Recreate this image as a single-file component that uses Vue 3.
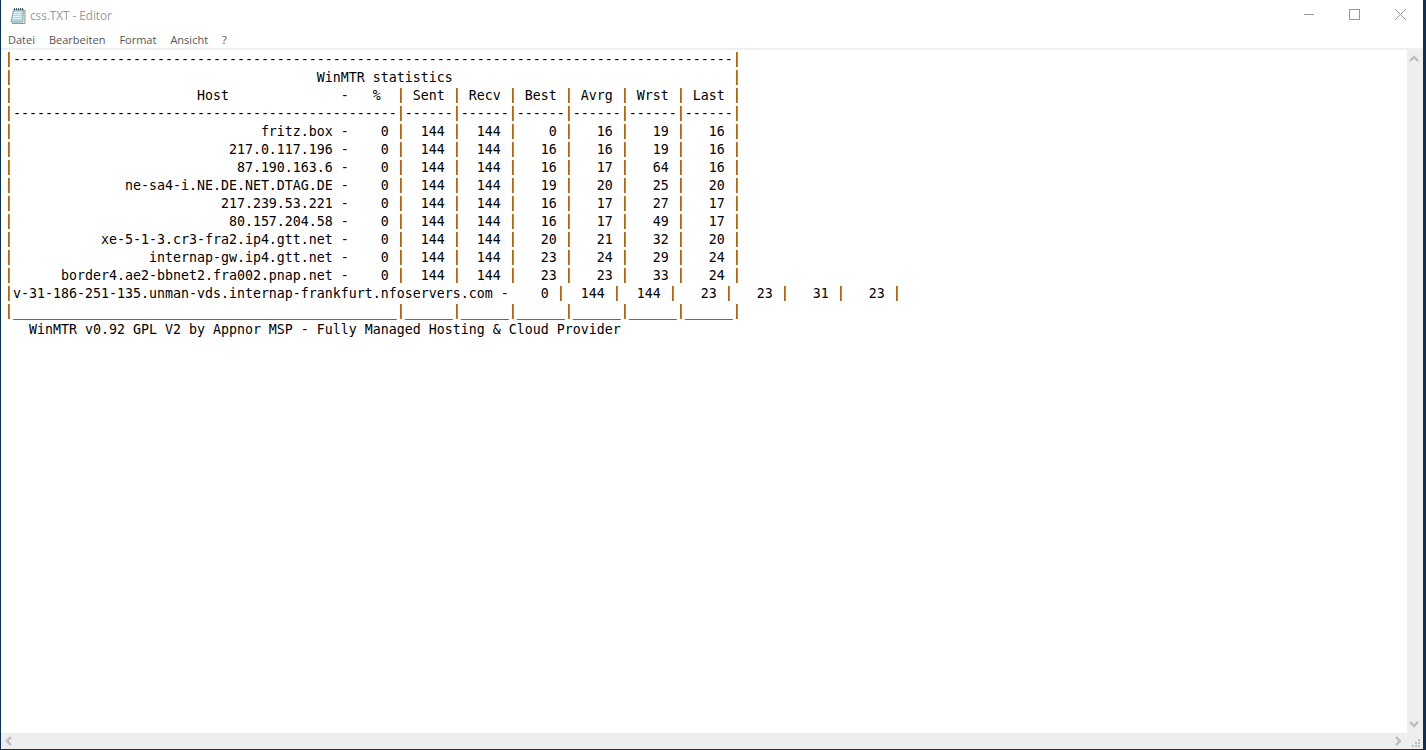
<script setup>
const menus = ['Datei', 'Bearbeiten', 'Format', 'Ansicht', '?']

const cell = (v) => String(v).padStart(5) + ' |'

const hosts = [
  ['fritz.box', 0, 144, 144, 0, 16, 19, 16],
  ['217.0.117.196', 0, 144, 144, 16, 16, 19, 16],
  ['87.190.163.6', 0, 144, 144, 16, 17, 64, 16],
  ['ne-sa4-i.NE.DE.NET.DTAG.DE', 0, 144, 144, 19, 20, 25, 20],
  ['217.239.53.221', 0, 144, 144, 16, 17, 27, 17],
  ['80.157.204.58', 0, 144, 144, 16, 17, 49, 17],
  ['xe-5-1-3.cr3-fra2.ip4.gtt.net', 0, 144, 144, 20, 21, 32, 20],
  ['internap-gw.ip4.gtt.net', 0, 144, 144, 23, 24, 29, 24],
  ['border4.ae2-bbnet2.fra002.pnap.net', 0, 144, 144, 23, 23, 33, 24],
  ['v-31-186-251-135.unman-vds.internap-frankfurt.nfoservers.com', 0, 144, 144, 23, 23, 31, 23],
]

const rows = hosts.map(([host, pct, ...rest]) =>
  '|' + host.padStart(40) + ' -    ' + pct + ' |' + rest.map(cell).join('')
)

const rule = (ch) => '|' + ch.repeat(48) + ('|' + ch.repeat(6)).repeat(6) + '|'

const lines = [
  '|' + '-'.repeat(90) + '|',
  '|' + ' '.repeat(38) + 'WinMTR statistics' + ' '.repeat(35) + '|',
  '|' + ' '.repeat(23) + 'Host' + ' '.repeat(14) + '-   %  | Sent | Recv | Best | Avrg | Wrst | Last |',
  rule('-'),
  ...rows,
  rule('_'),
  '   WinMTR v0.92 GPL V2 by Appnor MSP - Fully Managed Hosting & Cloud Provider',
]

// split on the pipes, they get their own colour (cleartype fringe in the original)
const parts = (line) => line.split(/(\|)/).filter((p) => p !== '')
</script>

<template>
  <div class="window">
    <header class="titlebar">
      <svg class="app-icon" width="17" height="17" viewBox="0 0 17 17">
        <path d="M5 3.5h11v13H3.5z" fill="#f4efe2" stroke="#a8925f" />
        <path d="M4.5 2.5h10l-.8 12.5H2z" fill="#a9d8ec" stroke="#7fb0c8" />
        <path d="M4.6 5.5h8.2M4.4 7.5h8.2M4.2 9.5h8.2M4 11.5h8.2" stroke="#e3f3fa" />
        <path d="M5.5 1v2.5M7.5 1v2.5M9.5 1v2.5M11.5 1v2.5M13.5 1v2.5" stroke="#4c5a63" />
      </svg>
      <span class="title">css.TXT - Editor</span>
      <div class="controls">
        <svg width="46" height="30" viewBox="0 0 46 30"><path d="M19 14.5h10" stroke="#999" /></svg>
        <svg width="46" height="30" viewBox="0 0 46 30"><rect x="18.5" y="9.5" width="10" height="10" fill="none" stroke="#999" /></svg>
        <svg width="46" height="30" viewBox="0 0 46 30"><path d="M18 9l11 11M29 9l-11 11" stroke="#999" /></svg>
      </div>
    </header>

    <nav class="menubar">
      <span v-for="m in menus" :key="m" class="menu-item">{{ m }}</span>
    </nav>

    <div class="editor">
      <div class="body-row">
        <pre class="text"><template v-for="(line, i) in lines" :key="i"><div class="line"><template v-for="(p, j) in parts(line)" :key="j"><span v-if="p === '|'" class="pipe">|</span><template v-else>{{ p }}</template></template></div></template></pre>
        <div class="vscroll">
          <svg width="16" height="16" viewBox="0 0 16 16"><path d="M3 11l4-4 4 4" fill="none" stroke="#bdbdbd" stroke-width="2.4" /></svg>
          <svg width="16" height="16" viewBox="0 0 16 16"><path d="M3 5l4 4 4-4" fill="none" stroke="#bdbdbd" stroke-width="2.4" /></svg>
        </div>
      </div>
      <div class="hscroll">
        <svg width="16" height="16" viewBox="0 0 16 16"><path d="M10 4l-4 4 4 4" fill="none" stroke="#bdbdbd" stroke-width="2.4" /></svg>
        <svg class="right" width="16" height="16" viewBox="0 0 16 16"><path d="M5 4l4 4-4 4" fill="none" stroke="#bdbdbd" stroke-width="2.4" /></svg>
        <svg width="16" height="16" viewBox="0 0 16 16" class="grip"><path d="M11 6h2v2h-2zM8 9h2v2H8zM11 9h2v2h-2zM5 12h2v2H5zM8 12h2v2H8zM11 12h2v2h-2z" fill="#bdbdbd" /></svg>
      </div>
    </div>
  </div>
</template>

<style>
html, body {
  margin: 0;
  overflow: hidden;
  background: #12304f;
}
</style>

<style scoped>
.window {
  box-sizing: border-box;
  width: 1426px;
  height: 750px;
  padding: 0 3px 1px 1px;
  background: #12304f;
  display: flex;
  flex-direction: column;
  font-family: "Open Sans", "Noto Sans", sans-serif;
}
.titlebar {
  height: 30px;
  flex: none;
  background: #fff;
  display: flex;
  align-items: center;
  padding-left: 8px;
}
.app-icon {
  flex: none;
}
.title {
  margin-left: 4px;
  font-size: 11.7px;
  color: #999;
}
.controls {
  margin-left: auto;
  display: flex;
}
.controls svg {
  display: block;
}
.menubar {
  box-sizing: border-box;
  height: 20px;
  flex: none;
  background: #fff;
  display: flex;
  align-items: center;
  padding: 0 0 0 7px;
  gap: 14px;
  font-size: 11px;
  color: #555;
  border-bottom: 2px solid #f0f0f0;
}
.editor {
  flex: 1;
  min-height: 0;
  display: flex;
  flex-direction: column;
}
.body-row {
  flex: 1;
  min-height: 0;
  display: flex;
}
.text {
  flex: 1;
  margin: 0;
  background: #fff;
  padding: 1px 0 0 4px;
  font-family: "DejaVu Sans Mono", "Liberation Mono", monospace;
  font-size: 13.29px;
  line-height: 18px;
  color: #000;
  overflow: hidden;
}
.line {
  height: 18px;
  white-space: pre;
}
/* glyph stays in the text, the bar itself is the two cleartype columns */
.pipe {
  color: transparent;
  background: linear-gradient(90deg, transparent 3px, #b5660f 3px, #b5660f 4px, #5b9bd0 4px, #5b9bd0 5px, transparent 5px);
}
.vscroll {
  width: 16px;
  flex: none;
  background: #eee;
  display: flex;
  flex-direction: column;
  justify-content: space-between;
}
.vscroll svg,
.hscroll svg {
  display: block;
}
.hscroll {
  height: 16px;
  flex: none;
  background: #eee;
  display: flex;
}
.hscroll .right {
  margin-left: auto;
}
</style>
